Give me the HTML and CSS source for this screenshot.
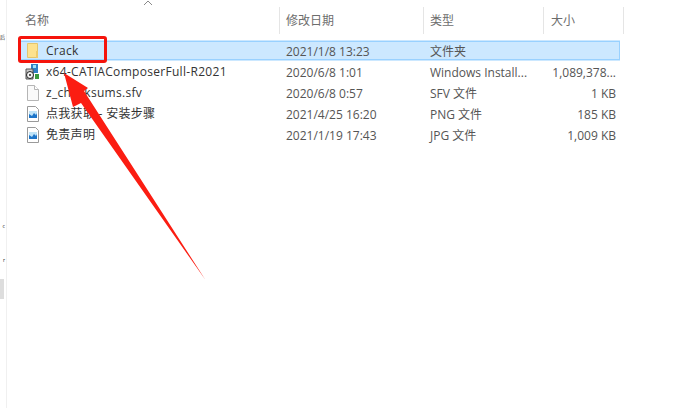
FILE: index.html
```html
<!DOCTYPE html>
<html lang="zh-CN">
<head>
  <meta charset="UTF-8">
  <title>Crack</title>
  <link rel="stylesheet" href="styles.css">
</head>
<body>
  <div class="nav">
    <span class="nav-char nav-a">后</span>
    <span class="nav-char nav-b">c</span>
    <span class="nav-char nav-c">r</span>
    <span class="nav-thumb"></span>
  </div>
  <div class="list">
    <div class="sort-row"><svg class="sort" width="10" height="6" viewBox="0 0 10 6"><path d="M1 5 5 1l4 4" fill="none" stroke="#8a8a8a"/></svg></div>
    <div class="head">
      <div class="hcell c-name">名称</div>
      <div class="hcell c-date">修改日期</div>
      <div class="hcell c-type">类型</div>
      <div class="hcell c-size">大小</div>
    </div>
    <div class="row selected">
      <div class="c-name name">
        <svg class="icon" width="16" height="16" viewBox="0 0 16 16"><path d="M2.500 .5h10v14h-10z" fill="#fde28f" stroke="#e3c56e"/><path d="M11 8h2v7h-2z" fill="#eecb6c"/></svg>
        Crack
      </div>
      <div class="c-date">2021/1/8 13:23</div>
      <div class="c-type">文件夹</div>
      <div class="c-size"></div>
    </div>
    <div class="row">
      <div class="c-name name">
        <svg class="icon" width="16" height="16" viewBox="0 0 16 16"><path d="M6 0h7v9H6z" fill="#2f7fc4"/><path d="M8 1h3v3H8z" fill="#9fe0f5"/><path d="M1 5h7v10H1z" fill="#c9c9c9" stroke="#555"/><circle cx="5" cy="11" r="3.500" fill="#f3f3f3" stroke="#222"/><circle cx="5" cy="11" r="1" fill="#222"/><path d="M10 10h4v5h-4z" fill="#3a9a3e"/></svg>
        x64-CATIAComposerFull-R2021
      </div>
      <div class="c-date">2020/6/8 1:01</div>
      <div class="c-type">Windows Install...</div>
      <div class="c-size">1,089,378...</div>
    </div>
    <div class="row">
      <div class="c-name name">
        <svg class="icon" width="16" height="16" viewBox="0 0 16 16"><path d="M2.500 .5h7l4 4v11h-11z" fill="#fafafa" stroke="#b5b5b5"/><path d="M9.500 .5v4h4" fill="#fff" stroke="#b5b5b5"/></svg>
        z_checksums.sfv
      </div>
      <div class="c-date">2020/6/8 0:57</div>
      <div class="c-type">SFV 文件</div>
      <div class="c-size">1 KB</div>
    </div>
    <div class="row">
      <div class="c-name name">
        <svg class="icon" width="16" height="16" viewBox="0 0 16 16"><path d="M2.500 .5h8l3 3v12h-11z" fill="#fff" stroke="#9a9a9a"/><path d="M4 5h8v7H4z" fill="#1c74c8"/><path d="M4 5h8v2l-1 2-2-2-2 3-3-2z" fill="#bfe3f7"/></svg>
        点我获取 - 安装步骤
      </div>
      <div class="c-date">2021/4/25 16:20</div>
      <div class="c-type">PNG 文件</div>
      <div class="c-size">185 KB</div>
    </div>
    <div class="row">
      <div class="c-name name">
        <svg class="icon" width="16" height="16" viewBox="0 0 16 16"><path d="M2.500 .5h8l3 3v12h-11z" fill="#fff" stroke="#9a9a9a"/><path d="M4 5h8v7H4z" fill="#1c74c8"/><path d="M4 5h8v2l-1 2-2-2-2 3-3-2z" fill="#bfe3f7"/></svg>
        免责声明
      </div>
      <div class="c-date">2021/1/19 17:43</div>
      <div class="c-type">JPG 文件</div>
      <div class="c-size">1,009 KB</div>
    </div>
  </div>
  <div class="red-box"></div>
  <svg class="arrow" width="694" height="408" viewBox="0 0 694 408"><path d="M205.500 280 81 103 73 107 64 73 88 88 84 91z" fill="#fb1d12"/></svg>
</body>
</html>
```
FILE: styles.css
```css
* { box-sizing: border-box; margin: 0; padding: 0; }
body {
  width: 694px;
  height: 408px;
  overflow: hidden;
  background: #fff;
  color: #555;
  font-family: "Open Sans", "Noto Sans CJK SC", sans-serif;
  font-size: 12px;
  display: flex;
}
.nav {
  width: 7px;
  border-right: 1px solid #f0f0f0;
  position: relative;
  flex-shrink: 0;
  overflow: hidden;
}
.nav-char {
  position: absolute;
  right: 1px;
  color: #222;
  font-size: 5px;
}
.nav-a { top: 33px; }
.nav-b { top: 223px; }
.nav-c { top: 257px; }
.nav-thumb {
  position: absolute;
  left: 0;
  top: 279px;
  width: 4px;
  height: 20px;
  background: #ddd;
}
.list { padding-left: 11px; flex: 1; }
.sort-row { height: 7px; padding: 0 0 0 125px; }
.sort { display: block; }
.head { display: flex; height: 27px; margin-bottom: 6px; }
.hcell {
  color: #6d6d6d;
  height: 27px;
  line-height: 27px;
  border-right: 1px solid #e5e5e5;
}
.head .c-name { padding-left: 7px; }
.c-name { width: 262px; flex-shrink: 0; }
.c-date { width: 144px; padding-left: 6px; flex-shrink: 0; }
.c-type { width: 120px; padding-left: 6px; flex-shrink: 0; }
.c-size { width: 80px; padding: 0 7px; flex-shrink: 0; }
.row .c-size { text-align: right; width: 76px; padding: 0 4px 0 0; }
.row {
  display: flex;
  height: 21px;
  line-height: 21px;
  width: 602px;
  border: 1px solid transparent;
  border-width: 1px 0;
}
.selected { background: #cce8ff; box-shadow: inset 0 0 0 1px #99d1ff; }
.name { display: flex; align-items: center; gap: 5px; padding-left: 7px; color: #333; letter-spacing: .3px; }
.icon { flex-shrink: 0; }
.red-box {
  position: absolute;
  left: 18px;
  top: 36px;
  width: 89px;
  height: 27px;
  border: 3px solid #f5140c;
  border-radius: 3px;
}
.arrow { position: absolute; left: 0; top: 0; }
```
